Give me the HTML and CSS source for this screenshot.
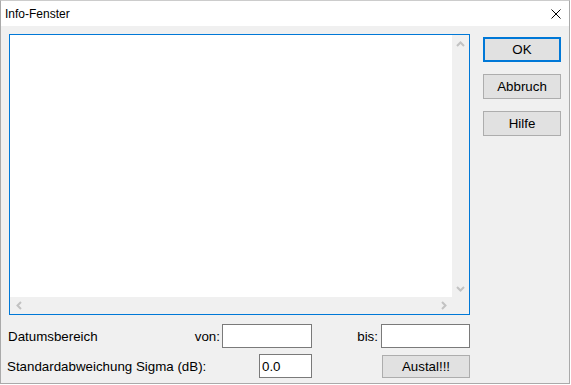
FILE: index.html
```html
<!DOCTYPE html>
<html lang="de">
<head>
    <meta charset="UTF-8">
    <title>Info-Fenster</title>
    <link rel="stylesheet" href="styles.css">
</head>
<body>

<div class="dialog">
    <div class="titlebar">
        <span class="title">Info-Fenster</span>
        <svg class="close-icon" width="10" height="10" viewBox="0 0 10 10">
            <path d="M0.5 0.5 L9.5 9.5 M9.5 0.5 L0.5 9.5" stroke="#000" stroke-width="1" fill="none"/>
        </svg>
    </div>

    <div class="dialog-body">
        <div class="main-column">
            <div class="info-box">
                <div class="info-text"></div>
                <div class="vscroll">
                    <span class="arrow">
                        <svg width="9" height="6" viewBox="0 0 9 6"><polyline points="1,5 4.5,1.5 8,5" stroke="#c2c2c2" stroke-width="2" fill="none"/></svg>
                    </span>
                    <span class="arrow">
                        <svg width="9" height="6" viewBox="0 0 9 6"><polyline points="1,1 4.5,4.5 8,1" stroke="#c2c2c2" stroke-width="2" fill="none"/></svg>
                    </span>
                </div>
                <div class="hscroll">
                    <span class="arrow">
                        <svg width="6" height="9" viewBox="0 0 6 9"><polyline points="5,1 1.5,4.5 5,8" stroke="#c2c2c2" stroke-width="2" fill="none"/></svg>
                    </span>
                    <span class="arrow">
                        <svg width="6" height="9" viewBox="0 0 6 9"><polyline points="1,1 4.5,4.5 1,8" stroke="#c2c2c2" stroke-width="2" fill="none"/></svg>
                    </span>
                </div>
                <div class="scroll-corner"></div>
            </div>

            <div class="form-grid">
                <div class="range-label">
                    <span>Datumsbereich</span>
                    <span>von:</span>
                </div>
                <input type="text" class="field field-date">
                <span class="bis-label">bis:</span>
                <input type="text" class="field field-date">

                <span class="sigma-label">Standardabweichung Sigma (dB):</span>
                <input type="text" class="field field-sigma" value="0.0">
                <span></span>
                <button class="btn btn-austal">Austal!!!</button>
            </div>
        </div>

        <div class="button-column">
            <button class="btn btn-default">OK</button>
            <button class="btn">Abbruch</button>
            <button class="btn">Hilfe</button>
        </div>
    </div>
</div>

</body>
</html>
```

FILE: styles.css
```css
body {
    margin: 0;
    background-color: #fff;
    font-family: "Liberation Sans", Arial, sans-serif;
    font-size: 13.33px;
    color: #000;
}
.dialog {
    box-sizing: border-box;
    width: 570px;
    height: 384px;
    border: 1px solid #aaaaaa;
    border-top-color: #cccccc;
    background-color: #f0f0f0;
    display: flex;
    flex-direction: column;
}
.titlebar {
    height: 25px;
    background-color: #fff;
    display: flex;
    align-items: center;
    justify-content: space-between;
    padding: 0 8px 0 4px;
    font-size: 12px;
}
.close-icon {
    display: block;
}
.dialog-body {
    display: flex;
    gap: 13px;
    padding: 8px 8px 0 8px;
}
.main-column {
    width: 461px;
}
.info-box {
    box-sizing: border-box;
    height: 281px;
    border: 1px solid #0078d7;
    display: grid;
    grid-template-columns: 1fr 17px;
    grid-template-rows: 1fr 17px;
}
.info-text {
    background-color: #fff;
}
.vscroll, .hscroll, .scroll-corner {
    background-color: #f0f0f0;
}
.vscroll {
    display: flex;
    flex-direction: column;
    justify-content: space-between;
}
.hscroll {
    display: flex;
    justify-content: space-between;
}
.arrow {
    width: 17px;
    height: 17px;
    display: flex;
    align-items: center;
    justify-content: center;
}
.arrow svg {
    display: block;
}
.form-grid {
    display: grid;
    grid-template-columns: 213px 90px 69px 89px;
    grid-template-rows: 24px 24px;
    row-gap: 6px;
    margin-top: 9px;
    align-items: center;
}
.range-label {
    display: flex;
    justify-content: space-between;
    margin-left: -1px;
    padding-right: 2px;
}
.bis-label {
    text-align: right;
    padding-right: 3px;
}
.sigma-label {
    margin-left: -2px;
    white-space: nowrap;
}
.field {
    box-sizing: border-box;
    height: 24px;
    margin: 0;
    border: 1px solid #7a7a7a;
    background-color: #fff;
    font-family: inherit;
    font-size: 13.33px;
    padding: 0 2px;
    outline: none;
}
.field-date {
    width: 100%;
}
.field-sigma {
    width: 53px;
    justify-self: end;
}
.btn {
    box-sizing: border-box;
    width: 78px;
    height: 25px;
    margin: 0;
    padding: 0;
    border: 1px solid #adadad;
    background-color: #e1e1e1;
    font-family: inherit;
    font-size: 13.33px;
    color: #000;
}
.btn-default {
    border: 2px solid #0078d7;
}
.btn-austal {
    width: 88px;
    height: 23px;
    justify-self: end;
}
.button-column {
    display: flex;
    flex-direction: column;
    gap: 12px;
    margin-top: 3px;
}
```
